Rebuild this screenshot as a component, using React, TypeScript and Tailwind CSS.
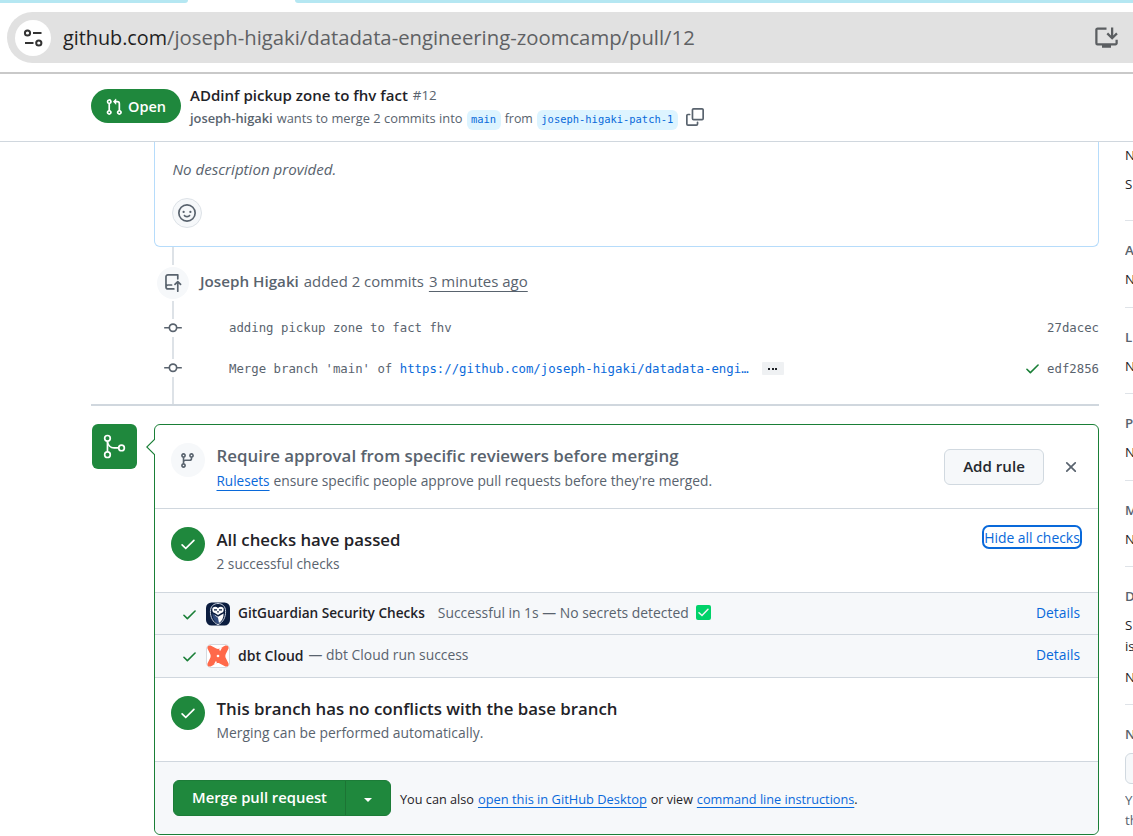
import type { ReactNode } from 'react';
import { MdInstallDesktop } from 'react-icons/md';
import { GoGitMerge } from 'react-icons/go';

const paths = {
  pullRequest:
    'M1.5 3.25a2.25 2.25 0 1 1 3 2.122v5.256a2.251 2.251 0 1 1-1.5 0V5.372A2.25 2.25 0 0 1 1.5 3.25Zm5.677-.177L9.573.677A.25.25 0 0 1 10 .854V2.5h1A2.5 2.5 0 0 1 13.5 5v5.628a2.251 2.251 0 1 1-1.5 0V5a1 1 0 0 0-1-1h-1v1.646a.25.25 0 0 1-.427.177L7.177 3.427a.25.25 0 0 1 0-.354ZM3.75 2.5a.75.75 0 1 0 0 1.5.75.75 0 0 0 0-1.5Zm0 9.5a.75.75 0 1 0 0 1.5.75.75 0 0 0 0-1.5Zm8.25.75a.75.75 0 1 0 1.5 0 .75.75 0 0 0-1.5 0Z',
  copy: 'M0 6.75C0 5.784.784 5 1.75 5h1.5a.75.75 0 0 1 0 1.5h-1.5a.25.25 0 0 0-.25.25v7.5c0 .138.112.25.25.25h7.5a.25.25 0 0 0 .25-.25v-1.5a.75.75 0 0 1 1.5 0v1.5A1.75 1.75 0 0 1 9.25 16h-7.5A1.75 1.75 0 0 1 0 14.25ZM5 1.75C5 .784 5.784 0 6.75 0h7.5C15.216 0 16 .784 16 1.75v7.5A1.75 1.75 0 0 1 14.25 11h-7.5A1.75 1.75 0 0 1 5 9.25Zm1.75-.25a.25.25 0 0 0-.25.25v7.5c0 .138.112.25.25.25h7.5a.25.25 0 0 0 .25-.25v-7.5a.25.25 0 0 0-.25-.25Z',
  smiley:
    'M8 0a8 8 0 1 1 0 16A8 8 0 0 1 8 0ZM1.5 8a6.5 6.5 0 1 0 13 0 6.5 6.5 0 0 0-13 0Zm3.82 1.636a.75.75 0 0 1 1.038.175l.007.009c.103.118.22.222.35.31.264.178.683.37 1.285.37.602 0 1.02-.192 1.285-.371.13-.088.247-.192.35-.31l.007-.008a.75.75 0 0 1 1.222.87l-.022.03a2.066 2.066 0 0 1-.184.213c-.16.166-.338.316-.53.445-.63.418-1.37.638-2.127.629-.946 0-1.652-.308-2.126-.63a3.331 3.331 0 0 1-.715-.657l-.014-.02a.75.75 0 0 1 .177-1.054ZM12 7a1 1 0 1 1-2 0 1 1 0 0 1 2 0ZM5 8a1 1 0 1 1 0-2 1 1 0 0 1 0 2Z',
  commit:
    'M11.93 8.5a4.002 4.002 0 0 1-7.86 0H.75a.75.75 0 0 1 0-1.5h3.32a4.002 4.002 0 0 1 7.86 0h3.32a.75.75 0 0 1 0 1.5Zm-1.43-.75a2.5 2.5 0 1 0-5 0 2.5 2.5 0 0 0 5 0Z',
  check:
    'M13.78 4.22a.75.75 0 0 1 0 1.06l-7.25 7.25a.75.75 0 0 1-1.06 0L2.22 9.28a.751.751 0 0 1 .018-1.042.751.751 0 0 1 1.042-.018L6 10.94l6.72-6.72a.75.75 0 0 1 1.06 0Z',
  x: 'M3.72 3.72a.75.75 0 0 1 1.06 0L8 6.94l3.22-3.22a.749.749 0 0 1 1.275.326.749.749 0 0 1-.215.734L9.06 8l3.22 3.22a.749.749 0 0 1-.326 1.275.749.749 0 0 1-.734-.215L8 9.06l-3.22 3.22a.751.751 0 0 1-1.042-.018.751.751 0 0 1-.018-1.042L6.94 8 3.72 4.78a.75.75 0 0 1 0-1.06Z',
  branch:
    'M9.5 3.25a2.25 2.25 0 1 1 3 2.122V6A2.5 2.5 0 0 1 10 8.5H6a1 1 0 0 0-1 1v1.128a2.251 2.251 0 1 1-1.5 0V5.372a2.25 2.25 0 1 1 1.5 0v1.836A2.493 2.493 0 0 1 6 7h4a1 1 0 0 0 1-1v-.628A2.25 2.25 0 0 1 9.5 3.25Zm-6 0a.75.75 0 1 0 1.5 0 .75.75 0 0 0-1.5 0Zm8.25-.75a.75.75 0 1 0 0 1.5.75.75 0 0 0 0-1.5ZM4.25 12a.75.75 0 1 0 0 1.5.75.75 0 0 0 0-1.5Z',
};

function Icon({ name, className }: { name: keyof typeof paths; className: string }) {
  return (
    <svg viewBox="0 0 16 16" fill="currentColor" className={`shrink-0 ${className}`}>
      <path d={paths[name]} />
    </svg>
  );
}

function RepoPush() {
  return (
    <svg viewBox="0 0 16 16" className="size-[18px]" fill="none" stroke="currentColor" strokeWidth="1.5" strokeLinecap="round" strokeLinejoin="round">
      <path d="M12.25 4.25V.75H3.5A1.75 1.75 0 0 0 1.75 2.5v9a1.75 1.75 0 0 0 1.75 1.75h5.25M1.75 11.5A1.75 1.75 0 0 1 3.5 9.75h3.25M12.24 15.25V7.1M9.74 9.3l2.5-2.5 2.5 2.5" />
    </svg>
  );
}

function Branch({ children }: { children: ReactNode }) {
  return (
    <span className="flex h-5 items-center rounded-md bg-[#ddf4ff] px-[4.5px] font-['DejaVu_Sans_Mono',monospace] text-[10.45px] text-[#0969da]">
      {children}
    </span>
  );
}

function Header() {
  return (
    <header className="flex h-[68px] shrink-0 border-b border-[#d0d7de] pl-[91px] pt-[15px]">
      <span className="flex h-[34px] w-[90px] items-center rounded-full bg-[#1f883d] pl-[14px] pt-px text-[14.5px] font-semibold text-white">
        <Icon name="pullRequest" className="mr-[5px] size-[18px]" />
        Open
      </span>
      <div className="ml-[9px] flex flex-col text-[#59636e]">
        <div className="-mt-[5px] flex h-[22px] items-center gap-[5px] text-[15.04px] text-[#1f2328]">
          <span className="font-semibold">ADdinf pickup zone to fhv fact</span>
          <span className="mt-px text-[13.3px] text-[#59636e]">#12</span>
        </div>
        <div className="mt-0.5 flex h-[22px] items-center text-[12.87px]">
          <span className="mr-1 font-semibold">joseph-higaki</span>
          <span className="mr-1">wants to merge 2 commits into</span>
          <span className="mt-0.5">
            <Branch>main</Branch>
          </span>
          <span className="mx-1 text-[12.4px]">from</span>
          <span className="mt-0.5">
            <Branch>joseph-higaki-patch-1</Branch>
          </span>
          <Icon name="copy" className="-mt-1 ml-2 size-[18px]" />
        </div>
      </div>
    </header>
  );
}

function BrowserBar() {
  return (
    <div className="h-[74px] shrink-0 border-b-2 border-[#c9c9c9]">
      <div className="flex h-[3px] justify-between bg-white">
        <span className="w-[188px] rounded-br-[5px] bg-[#b5e7f2]" />
        <span className="w-[838px] rounded-bl-[5px] bg-[#b5e7f2]" />
      </div>
      <div className="ml-[7px] mt-[9px] flex h-[51px] items-center rounded-l-full bg-[#e1e1e1] pl-2 pr-[13px]">
        <span className="flex size-9 items-center justify-center rounded-full bg-white">
          <svg viewBox="0 0 20 20" className="mr-px size-5" fill="none" stroke="#333" strokeWidth="2">
            <circle cx="4.5" cy="5" r="2.6" />
            <path d="M10 5h8.5M2 15h8.5" />
            <circle cx="15.8" cy="15" r="2.6" />
          </svg>
        </span>
        <span className="ml-3 text-[19.8px] text-[#1f1f1f]">github.com</span>
        <span className="text-[20.29px] text-[#5f6164]">/joseph-higaki/datadata-engineering-zoomcamp/pull/12</span>
        <MdInstallDesktop className="ml-auto size-[27px] text-[#5b5e61]" />
      </div>
    </div>
  );
}

function Timeline() {
  return (
    <div className="ml-[66px] flex h-[157px] text-[#59636e]">
      <div className="flex w-8 flex-col items-center">
        <span className="h-[18px] w-0.5 bg-[#dde2e7]" />
        <span className="my-0.5 flex size-8 items-center justify-center rounded-full bg-[#f6f8fa]">
          <RepoPush />
        </span>
        <span className="h-[18px] w-0.5 bg-[#dde2e7]" />
        <Icon name="commit" className="size-[18px]" />
        <span className="h-[22px] w-0.5 bg-[#dde2e7]" />
        <Icon name="commit" className="size-[18px]" />
        <span className="h-[27px] w-0.5 bg-[#dde2e7]" />
      </div>
      <div className="flex flex-1 flex-col pl-[11px] pt-[23px]">
        <div className="flex h-[22px] items-center gap-[5px] text-[15px]">
          <span className="text-[15.2px] font-semibold">Joseph Higaki</span>
          <span className="text-[14.9px]">added 2 commits</span>
          <span className="underline underline-offset-4 [text-decoration-skip-ink:none]">3 minutes ago</span>
        </div>
        <div className="mt-[25px] flex h-[22px] items-center justify-between pl-[29px] font-['DejaVu_Sans_Mono',monospace] text-[12.34px]">
          <span>adding pickup zone to fact fhv</span>
          <span>27dacec</span>
        </div>
        <div className="mt-[19px] flex h-[22px] items-center pl-[29px] font-['DejaVu_Sans_Mono',monospace] text-[12.34px]">
          <span className="whitespace-pre">Merge branch 'main' of </span>
          <span className="text-[#0969da]">https://github.com/joseph-higaki/datadata-engi…</span>
          <span className="-mt-0.5 ml-[13px] flex h-[13px] w-[22px] items-center justify-center gap-[1.5px] rounded-[1px] bg-[#eff1f3]">
            <i className="mt-px size-0.5 bg-[#1f2328]" />
            <i className="mt-px size-0.5 bg-[#1f2328]" />
            <i className="mt-px size-0.5 bg-[#1f2328]" />
          </span>
          <Icon name="check" className="-mt-0.5 ml-auto mr-[6px] size-[17px] text-[#1a7f37]" />
          <span>edf2856</span>
        </div>
      </div>
    </div>
  );
}

function Guardian() {
  return (
    <svg viewBox="0 0 24 24" className="size-6">
      <rect y=".5" width="24" height="23" rx="5.500" fill="#0b1d3f" />
      <path d="M12 1.500C8 1.500 4.400 4 4.400 9.500c0 6 2.400 10.600 7.600 13.300 5.200-2.700 7.600-7.300 7.600-13.300C19.600 4 16 1.500 12 1.500Z" fill="none" stroke="#c9d1df" strokeWidth="1" />
      <path d="M6.500 6c2-1.800 3.700-1.500 5.500 0 1.800-1.500 3.500-1.800 5.500 0 .6 2.700-.2 4.700-2.300 5.100L12 13l-3.200-1.900C6.700 10.700 5.900 8.700 6.500 6Z" fill="#fff" />
      <path d="M8.500 12.500 12 14.800l5.600-3.300c.2 4.300-1.700 8-5.600 10.300-2.600-2-3.800-5-3.500-9.300Z" fill="#fff" />
      <path d="M6.400 11.300 12 15.800l1 5.300-1 .7c-3.600-2-5.600-5.800-5.600-10.500Z" fill="#324b7c" />
      <path d="M8 7.800h3M13 7.800h3" stroke="#0b1d3f" strokeWidth="1.200" />
      <path d="m11 9.300 1 2 1-2Z" fill="#0b1d3f" />
    </svg>
  );
}

function Dbt() {
  return (
    <svg viewBox="0 0 24 24" className="size-6">
      <rect x=".5" y=".5" width="23" height="23" rx="4.500" fill="#fff" stroke="#d5dae0" />
      <path
        d="M1.500 4.600C.9 2.600 2.500.9 4.600 1.500L10.300 4.600c1 .5 2.400.5 3.400 0l5.700-3.100c2.100-.6 3.700 1.100 3.100 3.100l-2.700 5.300c-.6 1.300-.6 2.900 0 4.200l2.700 5.300c.6 2-1 3.700-3.100 3.100l-5.700-3.100c-1-.5-2.400-.5-3.400 0l-5.700 3.100c-2.100.6-3.700-1.100-3.100-3.100l2.700-5.300c.6-1.300.6-2.900 0-4.200Z"
        fill="#ff694a"
      />
      <path d="M13 4.800 16.500 3l-2.500 4.200ZM11 19.200 7.500 21l2.500-4.200Z" fill="#fff" />
      <circle cx="12" cy="12" r="1.300" fill="#fff" />
    </svg>
  );
}

function DoneBadge() {
  return (
    <span className="mt-[18px] flex size-[34px] shrink-0 items-center justify-center rounded-full bg-[#1f883d] text-white">
      <Icon name="check" className="size-[18px]" />
    </span>
  );
}

function MergePanel() {
  const link = 'text-[#0969da] underline [text-decoration-skip-ink:none]';
  return (
    <section className="relative h-[411px] w-[945px] rounded-md border border-[#1a7f37] bg-white text-[13.8px] text-[#59636e]">
      <svg viewBox="0 0 9 18" className="absolute -left-[9px] top-[13px] h-[18px] w-[9px]">
        <path d="M9 1 .8 9 9 17" fill="#fff" stroke="#1a7f37" strokeWidth="1.100" />
      </svg>
      <div className="flex h-[84px] border-b border-[#d0d7de] pl-4 pr-[18px]">
        <span className="mt-[18px] flex size-[34px] items-center justify-center rounded-full bg-[#f6f8fa]">
          <Icon name="branch" className="mr-px size-[17px]" />
        </span>
        <div className="ml-[11.5px] mt-[19px]">
          <div className="h-6 text-[16.86px] font-semibold leading-6">Require approval from specific reviewers before merging</div>
          <div className="flex items-baseline gap-1 leading-[25px]">
            <span className={`text-[13.55px] underline-offset-4 ${link}`}>Rulesets</span>
            <span>ensure specific people approve pull requests before they're merged.</span>
          </div>
        </div>
        <button className="ml-auto mt-6 h-9 w-[100px] rounded-md border border-[#d1d9e0] bg-[#f6f8fa] pb-0.5 text-[15.1px] font-semibold text-[#25292e]">
          Add rule
        </button>
        <Icon name="x" className="ml-[18px] mt-[33px] size-[18px]" />
      </div>
      <div className="flex h-[84px] border-b border-[#d0d7de] pl-4 pr-4">
        <DoneBadge />
        <div className="ml-[11.5px] mt-[19px]">
          <div className="h-6 text-[16.8px] font-semibold leading-6 text-[#1f2328]">All checks have passed</div>
          <div className="text-[13.68px] leading-6">2 successful checks</div>
        </div>
        <span className="ml-auto mt-4 flex h-6 w-[100px] items-center justify-center rounded-[7px] border-2 border-[#0969da] text-[13.9px] text-[#0969da]">
          <span className="mt-px whitespace-nowrap leading-5">Hide all checks</span>
        </span>
      </div>
      <div className="flex h-[42px] items-center border-b border-[#d0d7de] bg-[#f6f8fa] pl-[25px] pr-[18px]">
        <Icon name="check" className="ml-px mt-px size-[17px] text-[#1a7f37]" />
        <span className="ml-[7.5px]">
          <Guardian />
        </span>
        <span className="-mt-px ml-[8.5px] text-[13.64px] font-semibold text-[#1f2328]">GitGuardian Security Checks</span>
        <span className="-mt-px ml-[13px] text-[13.88px]">Successful in 1s — No secrets detected</span>
        <span className="-mt-0.5 ml-[7px] flex size-[15px] items-center justify-center rounded-[2px] bg-[#00d26a]">
          <svg viewBox="0 0 15 15" className="size-[15px]" fill="none" stroke="#f4f4f4" strokeWidth="1.500" strokeLinecap="round">
            <path d="M3 7.700 6 10.500 12 4.300" />
          </svg>
        </span>
        <span className="-mt-px ml-auto text-[#0969da]">Details</span>
      </div>
      <div className="flex h-[43px] items-center border-b border-[#d0d7de] bg-[#f6f8fa] pl-[25px] pr-[18px]">
        <Icon name="check" className="ml-px size-[17px] text-[#1a7f37]" />
        <span className="ml-[7.5px]">
          <Dbt />
        </span>
        <span className="-mt-0.5 ml-[8.5px] text-[14px] font-semibold text-[#1f2328]">dbt Cloud</span>
        <span className="-mt-0.5 ml-[5px] text-[13.88px]">— dbt Cloud run success</span>
        <span className="-mt-0.5 ml-auto text-[#0969da]">Details</span>
      </div>
      <div className="flex h-[84px] border-b border-[#d0d7de] pl-4">
        <DoneBadge />
        <div className="ml-[11.5px] mt-[19px]">
          <div className="h-6 text-[16.83px] font-semibold leading-6 text-[#1f2328]">This branch has no conflicts with the base branch</div>
          <div className="text-[13.88px] leading-[23px]">Merging can be performed automatically.</div>
        </div>
      </div>
      <div className="flex h-[72px] items-center rounded-b-md bg-[#f6f8fa] pl-[18px] text-[#1f2328]">
        <div className="flex h-9 w-[218px] rounded-md border border-[#1c7c38] bg-[#1f883d] text-white">
          <span className="w-[172px] border-r border-[#1c7434] text-center text-[14.8px] font-semibold leading-[33px]">Merge pull request</span>
          <span className="flex flex-1 items-center justify-center">
            <svg viewBox="0 0 8 4" className="mt-[3px] h-1 w-2" fill="currentColor">
              <path d="M0 0h8L4 4Z" />
            </svg>
          </span>
        </div>
        <div className="ml-[9px] mt-1 flex items-baseline gap-1 text-[12.7px]">
          <span>You can also</span>
          <span className={`text-[12.85px] underline-offset-3 ${link}`}>open this in GitHub Desktop</span>
          <span className="text-[12.5px]">or view</span>
          <span>
            <span className={`underline-offset-3 ${link}`}>command line instructions</span>.
          </span>
        </div>
      </div>
    </section>
  );
}

function Side({ children, className }: { children: ReactNode; className: string }) {
  return <div className={`h-5 whitespace-nowrap text-[13.3px] leading-5 ${className}`}>{children}</div>;
}

function Sidebar() {
  const head = 'font-semibold text-[#59636e]';
  const rule = 'h-px bg-[#dfe3e8]';
  return (
    <aside className="ml-[26px] w-[8px] overflow-hidden text-[#1f2328]">
      <Side className="mt-[3px]">N</Side>
      <Side className="mt-[9px]">S</Side>
      <div className={`mt-[26px] ${rule}`} />
      <Side className={`mt-[19px] ${head}`}>A</Side>
      <Side className="mt-[9px]">N</Side>
      <div className={`mt-[18px] ${rule}`} />
      <Side className={`mt-[19px] ${head}`}>L</Side>
      <Side className="mt-[9px]">N</Side>
      <div className={`mt-[17px] ${rule}`} />
      <Side className={`mt-[19px] ${head}`}>P</Side>
      <Side className="mt-[9px]">N</Side>
      <div className={`mt-[18px] ${rule}`} />
      <Side className={`mt-[19px] ${head}`}>M</Side>
      <Side className="mt-[9px]">N</Side>
      <div className={`mt-[17px] ${rule}`} />
      <Side className={`mt-[19px] ${head}`}>D</Side>
      <Side className="mt-[9px]">S</Side>
      <Side className="mt-px">is</Side>
      <Side className="mt-[11px]">N</Side>
      <div className={`mt-[17px] ${rule}`} />
      <Side className={`mt-[19px] ${head}`}>N</Side>
      <div className="mt-[9px] h-[31px] w-40 rounded-md border border-[#d1d9e0] bg-[#f6f8fa]" />
      <Side className="mt-[6px] text-[#59636e]">Y</Side>
      <Side className="text-[#59636e]">th</Side>
    </aside>
  );
}

export default function App() {
  return (
    <div className="flex h-[836px] w-[1133px] flex-col overflow-hidden whitespace-nowrap bg-white font-['Open_Sans',sans-serif]">
      <BrowserBar />
      <Header />
      <div className="flex min-h-0 flex-1">
        <main className="ml-[91px] w-[1008px]">
          <div className="ml-[63px] h-[105px] rounded-b-md border border-t-0 border-[#b6dcfb] pl-[18px] pt-4 text-[#59636e]">
            <div className="-ml-[0.5px] h-[22px] text-[15.1px] italic leading-[22px]">No description provided.</div>
            <span className="-ml-px mt-[18px] flex size-[30px] items-center justify-center rounded-full border border-[#dde2e7] bg-[#f6f8fa]">
              <Icon name="smiley" className="size-[18px]" />
            </span>
          </div>
          <Timeline />
          <div className="h-0.5 bg-[#d0d7de]" />
          <div className="mt-[18px] flex justify-between">
            <span className="ml-px flex size-[45px] items-center justify-center rounded-md bg-[#1f883d] text-white">
              <GoGitMerge className="size-[27px]" />
            </span>
            <MergePanel />
          </div>
        </main>
        <Sidebar />
      </div>
    </div>
  );
}
